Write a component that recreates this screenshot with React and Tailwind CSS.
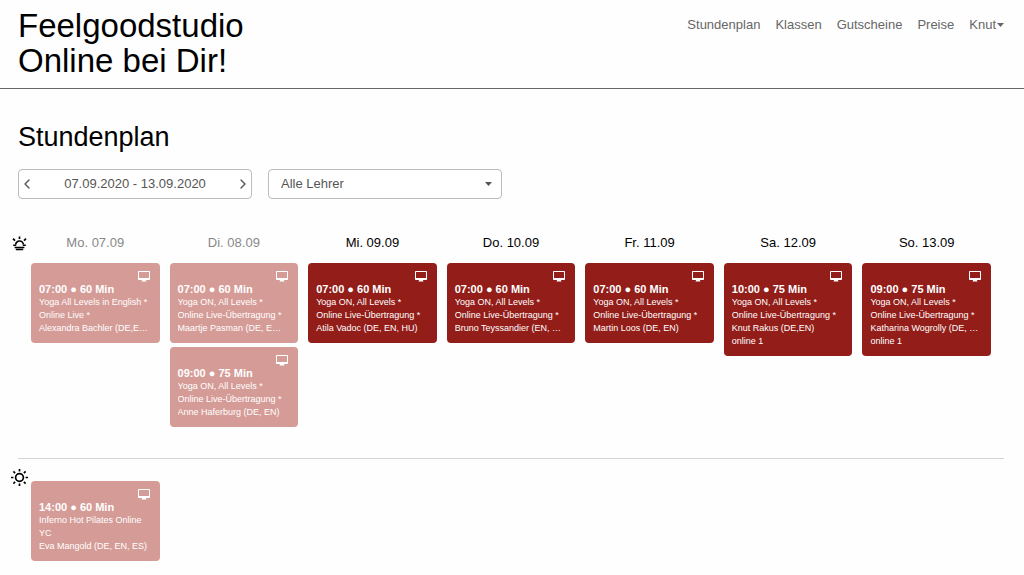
import { ChevronLeft, ChevronRight } from "lucide-react";

const NAV_LINKS = ["Stundenplan", "Klassen", "Gutscheine", "Preise"];

const YOGA_ON = ["Yoga ON, All Levels *", "Online Live-Übertragung *"];

const DAYS = [
	{
		label: "Mo. 07.09",
		past: true,
		morning: [
			{ time: "07:00 ● 60 Min", title: ["Yoga All Levels in English *", "Online Live *"], teacher: "Alexandra Bachler (DE,E…" },
		],
		midday: [
			{ time: "14:00 ● 60 Min", title: ["Inferno Hot Pilates Online", "YC"], teacher: "Eva Mangold (DE, EN, ES)" },
		],
	},
	{
		label: "Di. 08.09",
		past: true,
		morning: [
			{ time: "07:00 ● 60 Min", title: YOGA_ON, teacher: "Maartje Pasman (DE, E…" },
			{ time: "09:00 ● 75 Min", title: YOGA_ON, teacher: "Anne Haferburg (DE, EN)" },
		],
		midday: [],
	},
	{
		label: "Mi. 09.09",
		morning: [{ time: "07:00 ● 60 Min", title: YOGA_ON, teacher: "Atila Vadoc (DE, EN, HU)" }],
		midday: [],
	},
	{
		label: "Do. 10.09",
		morning: [{ time: "07:00 ● 60 Min", title: YOGA_ON, teacher: "Bruno Teyssandier (EN, …" }],
		midday: [],
	},
	{
		label: "Fr. 11.09",
		morning: [{ time: "07:00 ● 60 Min", title: YOGA_ON, teacher: "Martin Loos (DE, EN)" }],
		midday: [],
	},
	{
		label: "Sa. 12.09",
		morning: [{ time: "10:00 ● 75 Min", title: YOGA_ON, teacher: "Knut Rakus (DE,EN)", room: "online 1" }],
		midday: [],
	},
	{
		label: "So. 13.09",
		morning: [{ time: "09:00 ● 75 Min", title: YOGA_ON, teacher: "Katharina Wogrolly (DE, …", room: "online 1" }],
		midday: [],
	},
];

const Caret = () => (
	<svg width="7" height="4" viewBox="0 0 7 4" fill="currentColor" aria-hidden="true">
		<path d="M0 0h7L3.5 4z" />
	</svg>
);

const SunriseIcon = () => (
	<svg width="15" height="15" viewBox="0 0 15 15" fill="none" stroke="black" strokeWidth="1.7" aria-hidden="true">
		<path d="M7.5 0.4v2.6M1 2.6l2 2M14 2.6l-2 2" />
		<path d="M3.7 8.6a3.8 3.6 0 0 1 7.6 0" />
		<path d="M1.2 9.2h3M10.8 9.2h3M2.6 11.4h9.8M3.8 13.4h7.4" strokeWidth="1.5" />
	</svg>
);

const SunIcon = () => (
	<svg width="17" height="17" viewBox="0 0 17 17" fill="none" stroke="black" strokeWidth="1.7" aria-hidden="true">
		<circle cx="8.5" cy="8.5" r="3.9" />
		<path d="M8.5 0v2.4M8.5 14.6V17M0 8.5h2.4M14.6 8.5H17M2.4 2.4l1.7 1.7M12.9 12.9l1.7 1.7M2.4 14.6l1.7-1.7M12.9 4.1l1.7-1.7" />
	</svg>
);

const MonitorIcon = () => (
	<svg width="12" height="11" viewBox="0 0 12 11" fill="white" aria-hidden="true">
		<path
			fillRule="evenodd"
			d="M.8 0h10.4a.8.8 0 0 1 .8.8v7.4a.8.8 0 0 1-.8.8H8v.6l.6.9H3.4l.6-.9V9H.8a.8.8 0 0 1-.8-.8V.8A.8.8 0 0 1 .8 0zM1 1v6h10V1z"
		/>
	</svg>
);

const ClassCard = ({ item, past }) => (
	<a
		href="#"
		className={`block rounded p-2 text-[9px] leading-[13px] text-white ${past ? "bg-[#d59c97]" : "bg-[#921d19]"}`}
	>
		<div className="flex justify-end pr-[2px]">
			<MonitorIcon />
		</div>
		<div className="text-[11px] leading-[14px] font-bold whitespace-nowrap">{item.time}</div>
		{item.title.map((line) => (
			<div key={line} className="truncate">{line}</div>
		))}
		<div className="truncate">{item.teacher}</div>
		{item.room && <div>{item.room}</div>}
	</a>
);

const DayColumns = ({ slot }) => (
	<div className="grid flex-1 grid-cols-7 gap-[10px]">
		{DAYS.map((day) => (
			<div key={day.label} className="flex min-w-0 flex-col gap-1">
				{day[slot].map((item) => (
					<ClassCard key={item.time} item={item} past={day.past} />
				))}
			</div>
		))}
	</div>
);

const App = () => {
	return (
		<div className="min-h-screen bg-[#fefefe] font-['Liberation_Sans',Arial,sans-serif] text-black">
			<header className="flex items-start justify-between border-b border-[#666] pt-2 pr-5 pb-[10px] pl-[18px]">
				<div className="text-[33px] leading-[35px]">
					Feelgoodstudio
					<br />
					Online bei Dir!
				</div>
				<nav className="flex gap-[15px] pt-2 text-[13px] leading-[18px] text-[#666]">
					{NAV_LINKS.map((link) => (
						<a key={link} href="#">{link}</a>
					))}
					<button type="button" className="flex items-center gap-px">
						Knut
						<Caret />
					</button>
				</nav>
			</header>

			<main>
				<div className="pt-8 pr-5 pl-[18px]">
					<h1 className="text-[27px] leading-8">Stundenplan</h1>
					<div className="mt-4 flex gap-4 text-[13px] text-[#555]">
						<div className="flex h-[30px] w-[234px] items-center justify-between rounded border border-[#bbb] bg-white">
							<button type="button" aria-label="Vorherige Woche">
								<ChevronLeft size={16} strokeWidth={2} />
							</button>
							<span>07.09.2020 - 13.09.2020</span>
							<button type="button" aria-label="Nächste Woche">
								<ChevronRight size={16} strokeWidth={2} />
							</button>
						</div>
						<div className="relative w-[234px]">
							<select
								aria-label="Lehrer"
								className="h-[30px] w-full appearance-none rounded border border-[#bbb] bg-white px-3"
							>
								<option>Alle Lehrer</option>
							</select>
							<span className="pointer-events-none absolute inset-y-0 right-[10px] flex items-center">
								<Caret />
							</span>
						</div>
					</div>
				</div>

				<section className="mt-8 pr-[33px] pl-3">
					<div className="flex items-center gap-1">
						<SunriseIcon />
						<div className="grid flex-1 grid-cols-7 gap-[10px] text-center text-[13px] leading-6">
							{DAYS.map((day) => (
								<h2 key={day.label} className={day.past ? "text-[#888]" : ""}>{day.label}</h2>
							))}
						</div>
					</div>
					<div className="mt-2 pl-[19px]">
						<DayColumns slot="morning" />
					</div>
				</section>

				<hr className="mt-[31px] mr-5 ml-[18px] border-[#d4d4d4]" />

				<section className="mt-[10px] flex items-start gap-[3px] pr-[33px] pb-3 pl-[11px]">
					<SunIcon />
					<div className="flex-1 pt-3">
						<DayColumns slot="midday" />
					</div>
				</section>
			</main>
		</div>
	);
};

export default App;
